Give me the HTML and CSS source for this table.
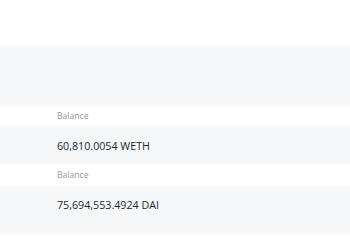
FILE: index.html
```html
<!DOCTYPE html>
<html>
<head>
<meta charset="utf-8">
<link rel="stylesheet" href="styles.css">
</head>
<body>
<div class="page">
  <div class="header"></div>
  <div class="panel"></div>
  <div class="item">
    <div class="label">Balance</div>
    <div class="value">60,810.0054 WETH</div>
  </div>
  <div class="item">
    <div class="label">Balance</div>
    <div class="value last">75,694,553.4924 DAI</div>
  </div>
</div>
</body>
</html>
```
FILE: styles.css
```css
html, body {
  margin: 0;
  padding: 0;
  background: #ffffff;
}
.page {
  width: 350px;
  font-family: "Open Sans", "Noto Sans", sans-serif;
}
.header {
  height: 46px;
}
.panel {
  height: 60px;
  background: #f5f7f9;
}
.label {
  height: 20px;
  line-height: 20px;
  padding-left: 57px;
  font-size: 8.6px;
  color: #9298a2;
}
.item + .item .label {
  height: 22px;
  line-height: 22px;
}
.value {
  height: 38px;
  line-height: 40px;
  padding-left: 57px;
  font-size: 10.7px;
  font-weight: 500;
  color: #22272f;
  background: #f5f7f9;
}
.value.last {
  height: 48px;
  line-height: 38px;
}
```
